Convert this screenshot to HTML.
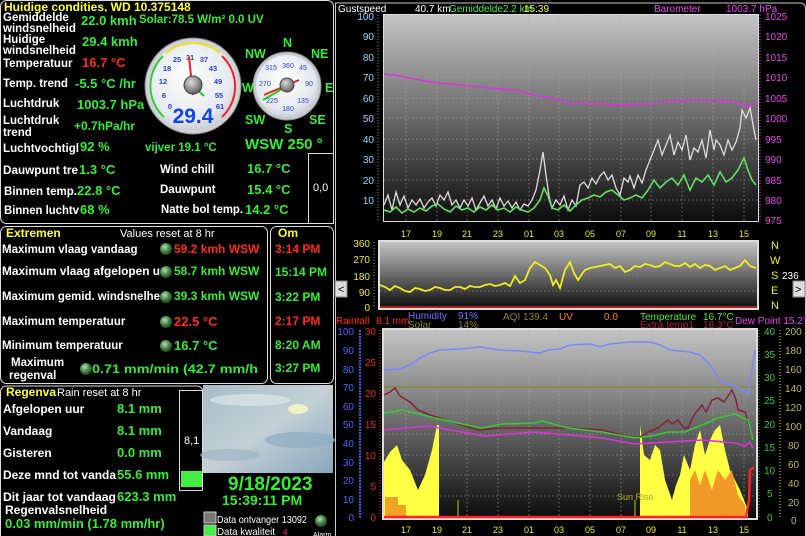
<!DOCTYPE html>
<html><head><meta charset="utf-8"><style>
html,body{margin:0;padding:0;background:#000;width:806px;height:536px;overflow:hidden}
svg{display:block}
text{font-family:"Liberation Sans",sans-serif}
.w{fill:#fff;font-weight:bold;font-size:11.5px}
.g{fill:#33ee33;font-weight:bold;font-size:13px}
.r{fill:#ff2a1a;font-weight:bold;font-size:13px}
.y{fill:#ffff33;font-weight:bold;font-size:12px}
</style></head><body>
<svg width="806" height="536" viewBox="0 0 806 536" xmlns="http://www.w3.org/2000/svg">
<defs>
<linearGradient id="cg" x1="0" y1="0" x2="0" y2="1"><stop offset="0" stop-color="#c4c4c4"/><stop offset="0.5" stop-color="#6a6a6a"/><stop offset="1" stop-color="#0c0c0c"/></linearGradient>
<radialGradient id="face" cx="0.45" cy="0.4" r="0.7"><stop offset="0" stop-color="#ffffff"/><stop offset="0.7" stop-color="#e4e8ee"/><stop offset="1" stop-color="#b8bcc4"/></radialGradient>
<radialGradient id="hub" cx="0.4" cy="0.35" r="0.7"><stop offset="0" stop-color="#dddddd"/><stop offset="1" stop-color="#555"/></radialGradient>
<radialGradient id="ball" cx="0.4" cy="0.35" r="0.7"><stop offset="0" stop-color="#b8e0b0"/><stop offset="0.5" stop-color="#4a8a4a"/><stop offset="1" stop-color="#1a3a1a"/></radialGradient>
<linearGradient id="sky" x1="0" y1="0" x2="1" y2="1"><stop offset="0" stop-color="#a9bcc6"/><stop offset="0.5" stop-color="#c3d0d6"/><stop offset="1" stop-color="#8aa6bc"/></linearGradient>
</defs>

<!-- Panel 1 -->
<rect x="0.5" y="0.5" width="333" height="223" rx="6" fill="#000" stroke="#ddd"/>
<text x="4" y="11" class="y">Huidige condities, WD 10.375148</text>
<text x="3" y="21" class="w">Gemiddelde</text><text x="3" y="32" class="w">windsnelheid</text>
<rect x="79" y="12" width="60" height="16" fill="#000"/>
<text x="81" y="25" class="g">22.0 kmh</text>
<text x="139" y="23" class="g" style="font-size:11.5px">Solar:78.5 W/m² 0.0 UV</text>
<text x="3" y="43" class="w">Huidige</text><text x="3" y="54" class="w">windsnelheid</text>
<text x="82" y="46" class="g">29.4 kmh</text>
<text x="3" y="67" class="w">Temperatuur</text><text x="82" y="67" class="r">16.7 °C</text>
<text x="3" y="87" class="w">Temp. trend</text><text x="75" y="88" class="g">-5.5 °C /hr</text>
<text x="3" y="107" class="w">Luchtdruk</text><text x="77" y="109" class="g">1003.7 hPa</text>
<text x="3" y="124" class="w">Luchtdruk</text><text x="3" y="136" class="w">trend</text>
<text x="74" y="130" class="g" style="font-size:12px">+0.7hPa/hr</text>
<text x="3" y="152" class="w" textLength="76" lengthAdjust="spacingAndGlyphs">Luchtvochtigl</text><text x="80" y="151" class="g">92 %</text>
<text x="145" y="151" class="g" style="font-size:11.5px">vijver 19.1 °C</text>
<text x="245" y="149" class="g" style="font-size:15px">WSW  250 °</text>
<text x="3" y="174" class="w" textLength="75" lengthAdjust="spacingAndGlyphs">Dauwpunt tre</text><text x="79" y="174" class="g">1.3 °C</text>
<text x="160" y="173" class="w">Wind chill</text><text x="247" y="173" class="g">16.7 °C</text>
<text x="4" y="195" class="w" textLength="73" lengthAdjust="spacingAndGlyphs">Binnen temp.</text><text x="77" y="195" class="g">22.8 °C</text>
<text x="160" y="193" class="w">Dauwpunt</text><text x="247" y="194" class="g">15.4 °C</text>
<text x="4" y="214" class="w" textLength="75" lengthAdjust="spacingAndGlyphs">Binnen luchtv</text><text x="80" y="214" class="g">68 %</text>
<text x="161" y="213" class="w" textLength="82" lengthAdjust="spacingAndGlyphs">Natte bol temp.</text><text x="245" y="214" class="g">14.2 °C</text>
<rect x="308.5" y="153.5" width="25" height="70" fill="#000" stroke="#ddd"/>
<text x="313" y="191" fill="#fff" font-size="11">0,0</text>

<!-- Gauge 1 -->
<circle cx="193" cy="86" r="48" fill="#cfd2d6" stroke="#888"/>
<circle cx="193" cy="86" r="44" fill="url(#face)"/>
<path d="M164 117 A42 42 0 0 1 163 56" fill="none" stroke="#33cc33" stroke-width="2"/>
<path d="M166 53 A42 42 0 0 1 220 53" fill="none" stroke="#eedd22" stroke-width="2"/>
<path d="M222 56 A42 42 0 0 1 222 117" fill="none" stroke="#ee2222" stroke-width="2"/>
<g fill="#2244cc" font-size="7.5" font-weight="bold" text-anchor="middle">
<text x="170" y="109">0</text><text x="164" y="98">6</text><text x="163" y="84">12</text><text x="167" y="71">18</text><text x="177" y="62">25</text><text x="190" y="60">31</text><text x="204" y="62">37</text><text x="213" y="71">43</text><text x="218" y="84">49</text><text x="219" y="98">55</text><text x="220" y="109">61</text>
</g>
<line x1="193" y1="95" x2="189" y2="57" stroke="#ee2222" stroke-width="2"/>
<line x1="193" y1="86" x2="204" y2="96" stroke="#22cc22" stroke-width="2"/>
<circle cx="193" cy="85" r="9" fill="url(#hub)" stroke="#444"/>
<text x="193" y="123" fill="#1144ee" font-size="21" font-weight="bold" text-anchor="middle">29.4</text>

<!-- Gauge 2 -->
<circle cx="287" cy="86" r="34" fill="#c6c9cd" stroke="#888"/>
<circle cx="287" cy="86" r="31" fill="url(#face)"/>
<g fill="#2244cc" font-size="7" text-anchor="middle">
<text x="288" y="68">360</text><text x="303" y="70">45</text><text x="309" y="86">90</text><text x="303" y="103">135</text><text x="288" y="111">180</text><text x="272" y="103">225</text><text x="265" y="86">270</text><text x="271" y="70">315</text>
</g>
<line x1="264" y1="95" x2="299" y2="80" stroke="#ee2222" stroke-width="2"/>
<line x1="287" y1="86" x2="263" y2="100" stroke="#22cc22" stroke-width="2"/>
<circle cx="287" cy="85" r="7" fill="url(#hub)" stroke="#444"/>
<g fill="#33ee33" font-size="12.5" font-weight="bold">
<text x="283" y="47">N</text><text x="245" y="58">NW</text><text x="311" y="58">NE</text><text x="242" y="92">W</text><text x="325" y="92">E</text><text x="245" y="124">SW</text><text x="309" y="124">SE</text><text x="284" y="133">S</text>
</g>

<!-- Panel 2 Extremen -->
<rect x="0.5" y="226.5" width="267" height="157" rx="6" fill="#000" stroke="#ddd"/>
<rect x="270.5" y="226.5" width="63" height="157" rx="6" fill="#000" stroke="#ddd"/>
<text x="6" y="237" class="y">Extremen</text>
<text x="120" y="237" fill="#fff" font-size="11">Values reset at 8 hr</text>
<text x="278" y="237" class="y">Om</text>
<g class="w">
<text x="2" y="253">Maximum vlaag vandaag</text>
<text x="2" y="275" textLength="158" lengthAdjust="spacingAndGlyphs">Maximum vlaag afgelopen u</text>
<text x="2" y="300" textLength="158" lengthAdjust="spacingAndGlyphs">Maximum gemid. windsnelhe</text>
<text x="2" y="325">Maximum temperatuur</text>
<text x="2" y="349">Minimum temperatuur</text>
<text x="11" y="366">Maximum</text><text x="9" y="379">regenval</text>
</g>
<g fill="url(#ball)"><circle cx="166" cy="249" r="6"/><circle cx="166" cy="272" r="6"/><circle cx="166" cy="297" r="6"/><circle cx="166" cy="322" r="6"/><circle cx="166" cy="346" r="6"/><circle cx="86" cy="369" r="6"/></g>
<text x="174" y="253" class="r" style="font-size:12px">59.2 kmh WSW</text>
<text x="174" y="275" class="g" style="font-size:12px">58.7 kmh WSW</text>
<text x="174" y="300" class="g" style="font-size:12px">39.3 kmh WSW</text>
<text x="174" y="326" class="r">22.5 °C</text>
<text x="174" y="350" class="g">16.7 °C</text>
<text x="92" y="373" class="g" style="font-size:12px" textLength="166" lengthAdjust="spacingAndGlyphs">0.71 mm/min (42.7 mm/h</text>
<g font-weight="bold" font-size="12">
<text x="275" y="253" fill="#ff2a1a">3:14 PM</text>
<text x="275" y="276" fill="#33ee33">15:14 PM</text>
<text x="275" y="301" fill="#33ee33">3:22 PM</text>
<text x="275" y="325" fill="#ff2a1a">2:17 PM</text>
<text x="275" y="349" fill="#33ee33">8:20 AM</text>
<text x="275" y="372" fill="#33ee33">3:27 PM</text>
</g>

<!-- Panel 3 Regenval -->
<path d="M0.5 536 V392 a6 6 0 0 1 6 -6 H197 a6 6 0 0 1 6 6" fill="#000" stroke="#ddd"/>
<text x="6" y="396" class="y">Regenva</text>
<text x="57" y="396" fill="#fff" font-size="11">Rain reset at 8 hr</text>
<g class="w" style="font-size:12px">
<text x="3" y="413">Afgelopen uur</text><text x="3" y="435">Vandaag</text><text x="3" y="457">Gisteren</text>
<text x="3" y="479" textLength="113" lengthAdjust="spacingAndGlyphs">Deze mnd tot vanda</text><text x="3" y="501" textLength="113" lengthAdjust="spacingAndGlyphs">Dit jaar tot vandaag</text><text x="5" y="514">Regenvalsnelheid</text>
</g>
<g class="g"><text x="117" y="413">8.1 mm</text><text x="117" y="435">8.1 mm</text><text x="117" y="457">0.0 mm</text><text x="117" y="479">55.6 mm</text><text x="117" y="501">623.3 mm</text>
<text x="5" y="528">0.03 mm/min (1.78 mm/hr)</text></g>
<rect x="179.5" y="390.5" width="23" height="100" fill="#000" stroke="#ddd"/>
<text x="184" y="444" fill="#fff" font-size="11">8,1</text>
<rect x="181" y="471" width="21" height="16" fill="#44ee44"/>
<rect x="203" y="385" width="130" height="88" fill="url(#sky)"/>
<ellipse cx="250" cy="400" rx="40" ry="6" fill="#dde6ea" opacity="0.7"/>
<ellipse cx="300" cy="440" rx="35" ry="8" fill="#8eabc0" opacity="0.7"/>
<ellipse cx="230" cy="455" rx="30" ry="6" fill="#9eb5c4" opacity="0.7"/>
<ellipse cx="298" cy="409" rx="10" ry="5" fill="#f2f0c8"/>
<text x="228" y="490" fill="#33ee33" font-size="19" font-weight="bold">9/18/2023</text>
<text x="222" y="505" fill="#33ee33" font-size="14" font-weight="bold">15:39:11 PM</text>
<rect x="204" y="512" width="12" height="11" fill="#777" stroke="#ccc"/>
<rect x="204" y="525" width="12" height="11" fill="#44ee44" stroke="#ccc"/>
<text x="217" y="523" fill="#fff" font-size="10.5" textLength="90" lengthAdjust="spacingAndGlyphs">Data ontvanger 13092</text>
<text x="217" y="535" fill="#fff" font-size="10.5" textLength="58" lengthAdjust="spacingAndGlyphs">Data kwaliteit</text>
<text x="283" y="535" fill="#ff3333" font-size="8">4</text>
<circle cx="321" cy="521" r="6" fill="url(#ball)"/>
<text x="313" y="537" fill="#fff" font-size="7">Alarm</text>

<!-- Right region border -->
<path d="M335.5 536 V3 H800 a5 5 0 0 1 5.5 5 V536" fill="none" stroke="#ccc"/>

<!-- Chart 1 -->
<text x="338" y="12" fill="#fff" font-size="10">Gustspeed</text>
<text x="415" y="12" fill="#fff" font-size="10">40.7 km</text>
<text x="449" y="12" fill="#44ee44" font-size="10">Gemiddelde2.2 km</text>
<text x="524" y="12" fill="#ffff33" font-size="10">15:39</text>
<text x="654" y="12" fill="#ee44ee" font-size="10">Barometer</text>
<text x="726" y="12" fill="#ee44ee" font-size="10">1003.7 hPa</text>
<rect x="383" y="14" width="376" height="208" fill="#ddd"/>
<rect x="384" y="15" width="374" height="206" fill="url(#cg)"/>
<g stroke="#aaa" stroke-width="0.6" stroke-dasharray="1.5 2.5">
<path d="M406 15V221M437 15V221M467 15V221M498 15V221M529 15V221M559 15V221M590 15V221M621 15V221M651 15V221M682 15V221M713 15V221M744 15V221"/>
<path d="M384 36H758M384 57H758M384 77H758M384 98H758M384 118H758M384 139H758M384 159H758M384 180H758M384 200H758"/>
</g>
<g fill="#9ad4ff" font-size="10" text-anchor="end">
<text x="374" y="20">100</text><text x="374" y="40">90</text><text x="374" y="61">80</text><text x="374" y="81">70</text><text x="374" y="102">60</text><text x="374" y="122">50</text><text x="374" y="143">40</text><text x="374" y="163">30</text><text x="374" y="184">20</text><text x="374" y="204">10</text>
</g>
<line x1="378" y1="15" x2="378" y2="221" stroke="#888" stroke-dasharray="1 2"/>
<line x1="760" y1="15" x2="760" y2="221" stroke="#cc44cc" stroke-dasharray="1 2"/>
<g fill="#ee44ee" font-size="10">
<text x="765" y="20">1025</text><text x="765" y="40">1020</text><text x="765" y="61">1015</text><text x="765" y="81">1010</text><text x="765" y="102">1005</text><text x="765" y="122">1000</text><text x="765" y="143">995</text><text x="765" y="163">990</text><text x="765" y="184">985</text><text x="765" y="204">980</text><text x="765" y="224">975</text>
</g>
<g fill="#eeee22" font-size="9" text-anchor="middle">
<text x="406" y="237">17</text><text x="437" y="237">19</text><text x="467" y="237">21</text><text x="498" y="237">23</text><text x="529" y="237">01</text><text x="559" y="237">03</text><text x="590" y="237">05</text><text x="621" y="237">07</text><text x="651" y="237">09</text><text x="682" y="237">11</text><text x="713" y="237">13</text><text x="744" y="237">15</text>
</g>
<polyline fill="none" stroke="#dd33dd" stroke-width="1.5" points="384,74 400,76 410,78 425,81 440,83 460,85 480,87 500,89 520,91 530,94 545,97 560,100 570,104 580,103 590,104 600,104 620,105 640,104 660,103 672,101 690,100 710,100 730,101 748,107 752,103 758,102"/>
<polyline fill="none" stroke="#dddddd" stroke-width="1.3" points="384,205 388,195 392,210 396,192 400,205 404,196 408,208 412,200 416,205 420,199 424,208 428,202 432,198 436,206 440,195 444,200 448,192 452,205 456,200 460,208 464,200 468,206 472,198 476,210 480,203 484,196 488,206 492,200 496,209 500,198 504,206 508,201 512,208 516,202 520,210 524,204 528,206 532,200 536,190 540,170 543,152 546,175 549,196 552,208 556,200 560,205 564,196 568,210 572,200 576,206 580,185 584,182 588,188 592,178 596,184 600,176 604,172 608,180 612,175 616,188 620,195 624,178 628,182 630,176 634,188 638,175 642,183 646,170 650,160 654,150 658,140 662,155 666,145 670,135 674,155 678,142 682,150 686,135 690,160 694,148 698,152 702,140 706,158 710,130 714,150 716,140 720,145 724,155 728,140 732,150 736,142 740,128 742,110 746,118 750,108 754,130 756,140"/>
<polyline fill="none" stroke="#66dd66" stroke-width="1.6" points="384,210 390,212 396,207 402,213 408,209 414,212 420,208 426,211 432,206 438,204 444,209 450,212 456,206 462,210 468,208 474,212 480,207 486,210 492,205 498,210 504,208 510,212 516,207 522,210 528,212 534,208 540,200 544,188 548,196 552,208 558,210 564,205 570,211 576,205 582,200 588,198 594,195 600,197 606,192 612,190 618,195 624,200 630,198 636,195 642,198 648,190 654,180 660,188 666,182 672,178 678,185 684,175 690,190 696,178 702,182 708,175 714,185 720,172 726,182 732,178 738,170 744,158 748,170 752,180 756,185"/>

<!-- Wind direction chart -->
<rect x="378" y="240" width="381" height="70" fill="#ddd"/>
<rect x="380" y="242" width="377" height="66" fill="url(#cg)"/>
<g stroke="#999" stroke-width="0.6" stroke-dasharray="1.5 2.5"><path d="M380 258H757M380 275H757M380 291H757"/></g>
<line x1="380" y1="307" x2="757" y2="307" stroke="#ee2222" stroke-width="1.5"/>
<g fill="#eeee22" font-size="10" text-anchor="end">
<text x="370" y="247">360</text><text x="370" y="263">270</text><text x="370" y="280">180</text><text x="370" y="296">90</text><text x="370" y="311">0</text>
</g>
<line x1="374" y1="242" x2="374" y2="308" stroke="#aa9922" stroke-dasharray="1 2"/>
<polyline fill="none" stroke="#eeee22" stroke-width="1.8" points="380,285 385,287 390,290 395,286 400,288 405,291 410,292 415,288 420,289 425,291 430,290 435,287 440,288 445,290 450,290 455,287 460,287 465,289 470,286 475,287 480,287 485,285 490,284 495,286 500,285 505,283 510,286 515,276 520,283 525,280 530,268 535,262 540,265 545,268 550,275 553,285 556,280 560,288 565,270 570,262 574,273 578,280 582,274 585,270 590,268 595,267 600,266 605,265 610,264 615,268 620,266 625,272 630,270 635,266 640,267 645,264 650,265 655,267 660,266 665,262 670,264 675,266 680,266 685,263 690,267 695,264 700,268 705,265 710,266 715,270 720,268 725,266 730,270 735,268 740,266 745,260 750,266 756,268"/>
<rect x="335" y="281" width="12" height="16" fill="#ddd" stroke="#888"/><text x="338" y="293" fill="#000" font-size="11">&lt;</text>
<rect x="793" y="281" width="12" height="16" fill="#ddd" stroke="#888"/><text x="795" y="293" fill="#000" font-size="11">&gt;</text>
<g fill="#eeee22" font-size="11" font-family="Liberation Serif">
<text x="771" y="249">N</text><text x="770" y="264">W</text><text x="771" y="279">S</text><text x="771" y="294">E</text><text x="771" y="309">N</text>
</g>
<text x="782" y="279" fill="#fff" font-size="10">236</text>

<!-- Bottom chart legend -->
<g font-size="10" font-family="Liberation Serif">
<text x="336" y="324" fill="#ff2a1a">Raintall</text><text x="376" y="324" fill="#ff2a1a">8.1 mm</text>
<text x="408" y="319" fill="#6677ff">Humidity</text><text x="408" y="328" fill="#888822">Solar</text>
<text x="458" y="319" fill="#6677ff">91%</text><text x="458" y="328" fill="#888822">14%</text>
<text x="503" y="320" fill="#888822">AQI  139.4</text><text x="559" y="320" fill="#ff8822">UV</text><text x="604" y="320" fill="#ff8822">0.0</text>
<text x="640" y="320" fill="#44ee44">Temperature</text><text x="640" y="328" fill="#aa2244">Extra temp1</text>
<text x="703" y="320" fill="#44ee44">16.7°C</text><text x="703" y="328" fill="#aa2244">18.3°C</text>
<text x="735" y="324" fill="#ee44ee">Dew Point 15.2°C</text>
</g>

<!-- Bottom chart -->
<rect x="382" y="328" width="376" height="192" fill="#ddd"/>
<rect x="384" y="330" width="372" height="188" fill="url(#cg)"/>
<g stroke="#aaa" stroke-width="0.6" stroke-dasharray="1.5 2.5">
<path d="M406 330V518M437 330V518M467 330V518M498 330V518M529 330V518M559 330V518M590 330V518M621 330V518M651 330V518M682 330V518M713 330V518M744 330V518"/>
<path d="M384 351H756M384 371H756M384 392H756M384 413H756M384 434H756M384 455H756M384 475H756M384 496H756"/>
</g>
<line x1="360" y1="330" x2="360" y2="518" stroke="#4455ee" stroke-width="2" stroke-dasharray="2 1"/>
<line x1="380" y1="330" x2="380" y2="518" stroke="#ee3322" stroke-dasharray="1 2"/>
<line x1="759" y1="330" x2="759" y2="518" stroke="#33aa33" stroke-dasharray="1 2"/>
<line x1="780" y1="330" x2="780" y2="518" stroke="#777722" stroke-width="2" stroke-dasharray="1 2"/>
<g fill="#4466ff" font-size="10" text-anchor="end">
<text x="354" y="335">100</text><text x="354" y="354">90</text><text x="354" y="373">80</text><text x="354" y="391">70</text><text x="354" y="410">60</text><text x="354" y="428">50</text><text x="354" y="447">40</text><text x="354" y="466">30</text><text x="354" y="484">20</text><text x="354" y="503">10</text><text x="354" y="521">0</text>
</g>
<g fill="#ee2222" font-size="10" text-anchor="end">
<text x="376" y="335">30</text><text x="376" y="366">25</text><text x="376" y="397">20</text><text x="376" y="428">15</text><text x="376" y="459">10</text><text x="376" y="490">5</text><text x="376" y="521">0</text>
</g>
<g fill="#33cc33" font-size="10">
<text x="764" y="335">40</text><text x="764" y="358">35</text><text x="764" y="381">30</text><text x="764" y="404">25</text><text x="764" y="428">20</text><text x="764" y="451">15</text><text x="764" y="474">10</text><text x="767" y="497">5</text><text x="767" y="521">0</text>
</g>
<g fill="#bbbb66" font-size="10">
<text x="785" y="335">200</text><text x="785" y="354">180</text><text x="785" y="373">160</text><text x="785" y="392">140</text><text x="785" y="411">120</text><text x="785" y="430">100</text><text x="788" y="449">80</text><text x="788" y="468">60</text><text x="788" y="487">40</text><text x="788" y="506">20</text><text x="791" y="524">0</text>
</g>
<g fill="#eeee22" font-size="9" text-anchor="middle">
<text x="406" y="533">17</text><text x="437" y="533">19</text><text x="467" y="533">21</text><text x="498" y="533">23</text><text x="529" y="533">01</text><text x="559" y="533">03</text><text x="590" y="533">05</text><text x="621" y="533">07</text><text x="651" y="533">09</text><text x="682" y="533">11</text><text x="713" y="533">13</text><text x="744" y="533">15</text>
</g>
<path d="M384 517V462L390 452L397 445L402 460L410 470L418 490L425 475L432 450L437 425L439 425V517Z" fill="#ffff44"/>
<path d="M640 517V425L644 455L650 460L655 445L660 450L665 480L672 500L676 485L680 475L684 455L690 470L695 445L700 430L705 455L710 440L715 430L720 425L725 450L730 470L735 480L740 490L748 510V517Z" fill="#ffff44"/>
<path d="M385 517V497H398V505H406V517Z" fill="#ee9922" opacity="0.9"/>
<path d="M690 517V480L695 470L700 485L705 470L712 490L718 470L725 480L732 470L738 495L745 505V517Z" fill="#ee8822" opacity="0.85"/>
<line x1="458" y1="500" x2="458" y2="517" stroke="#888822" stroke-width="1.5"/>
<line x1="635" y1="500" x2="635" y2="517" stroke="#888822" stroke-width="1.5"/>
<text x="617" y="500" fill="#aaaa33" font-size="9">Sun Rise</text>
<line x1="384" y1="387" x2="756" y2="387" stroke="#888833" stroke-width="1.5"/>
<polyline fill="none" stroke="#7788ff" stroke-width="1.5" points="384,370 400,369 410,365 420,358 430,353 440,350 460,349 480,347 500,350 520,351 540,353 548,350 560,349 570,345 590,344 600,347 610,344 630,342 650,342 660,345 670,350 690,352 700,355 710,365 720,380 730,385 740,388 745,392 748,395 752,370 755,350"/>
<polyline fill="none" stroke="#882233" stroke-width="1.5" points="384,395 390,392 395,388 400,396 410,402 418,410 430,415 452,422 478,430 500,428 535,428 570,428 602,430 635,438 642,436 648,432 658,428 668,420 672,424 678,420 684,428 688,428 694,415 702,405 706,412 712,400 718,398 724,402 732,390 736,400 738,410 745,412 752,436"/>
<polyline fill="none" stroke="#33cc33" stroke-width="1.5" points="384,413 402,410 435,418 462,424 482,428 502,424 535,423 542,421 568,428 602,432 635,438 652,436 668,432 685,432 702,425 718,418 735,414 748,420 753,440"/>
<polyline fill="none" stroke="#dd33dd" stroke-width="1.5" points="384,430 428,426 468,433 485,436 535,432 568,435 602,438 635,444 668,442 702,440 735,443 745,446 750,442 753,448"/>
<polyline fill="none" stroke="#ff2222" stroke-width="2.5" points="384,517 746,517 749,500 750,470 754,467"/>
</svg>
</body></html>
